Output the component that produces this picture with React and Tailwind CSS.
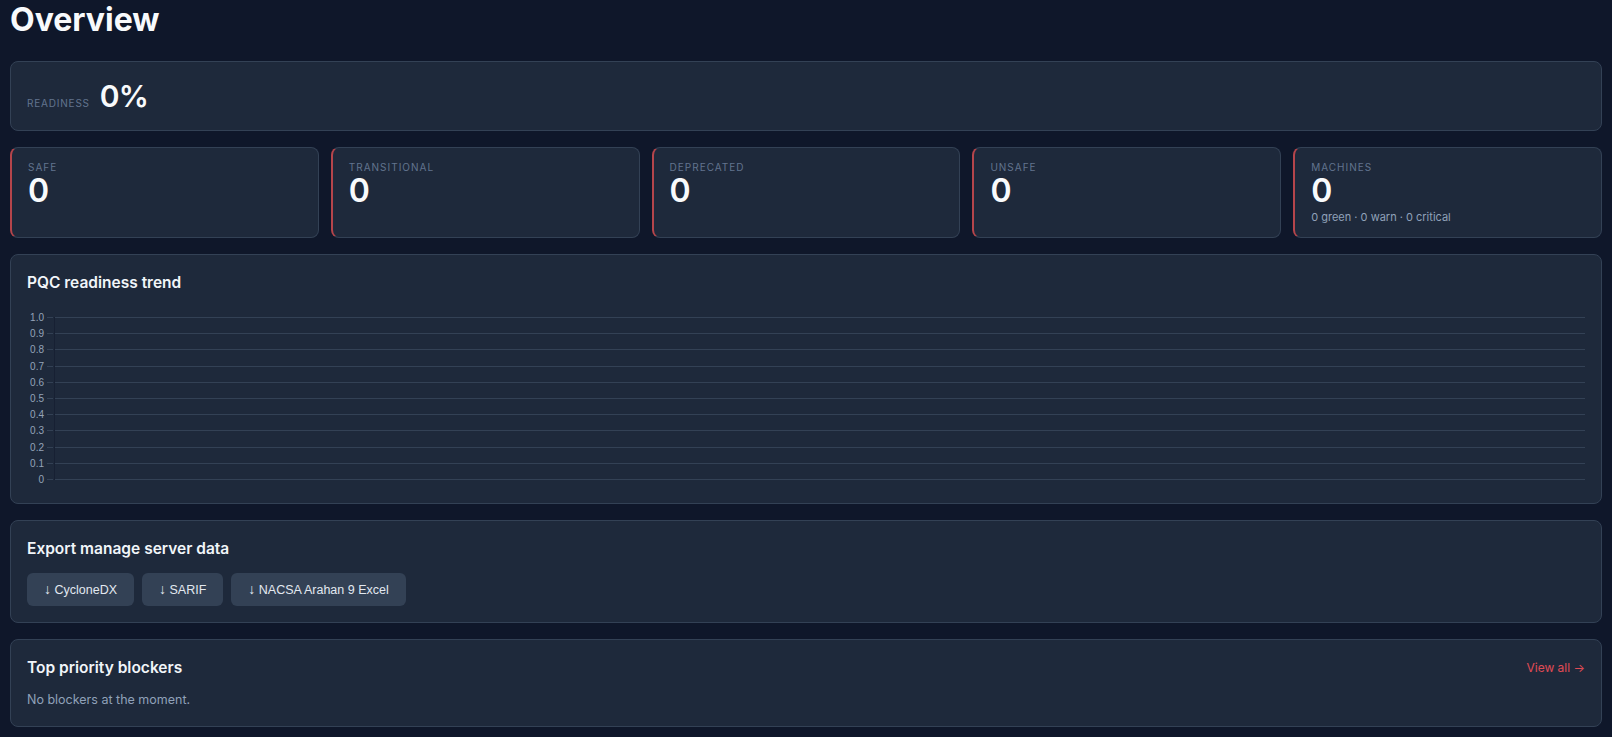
import React from "react";

const stats = [
  { label: "SAFE", value: "0" },
  { label: "TRANSITIONAL", value: "0" },
  { label: "DEPRECATED", value: "0" },
  { label: "UNSAFE", value: "0" },
  { label: "MACHINES", value: "0", sub: "0 green · 0 warn · 0 critical" },
];

const ticks = ["1.0", "0.9", "0.8", "0.7", "0.6", "0.5", "0.4", "0.3", "0.2", "0.1", "0"];

function Chart() {
  const top = 14;
  const step = 16.2;
  return (
    <svg width="100%" height="184" className="block">
      {ticks.map((t, i) => {
        const y = Math.round(top + i * step);
        return (
          <g key={t}>
            <text
              x="17"
              y={y + 3.5}
              textAnchor="end"
              fontSize="10"
              fill="#94a3b8"
              fontFamily="'Liberation Sans', Arial, sans-serif"
            >
              {t}
            </text>
            <line x1="20" x2="26" y1={y + 0.5} y2={y + 0.5} stroke="#334155" strokeWidth="1" />
            <line x1="27" x2="100%" y1={y + 0.5} y2={y + 0.5} stroke="#334155" strokeWidth="1" />
          </g>
        );
      })}
      <line x1="27.5" x2="27.5" y1={top} y2={top + 10 * step + 1} stroke="#172033" strokeWidth="1" />
    </svg>
  );
}

export default function App() {
  return (
    <div
      className="min-h-[737px] bg-[#0f172a] px-2.5 pt-[2px] pb-2.5 text-slate-100"
      style={{ fontFamily: "Inter, 'Noto Sans', sans-serif" }}
    >
      <h1 className="text-[32px] leading-9 font-bold text-slate-50">Overview</h1>

      <div className="mt-[23px] flex items-baseline gap-2.5 rounded-lg border border-[#334155] bg-[#1e293b] px-4 py-4">
        <span className="text-[10px] tracking-[0.08em] text-slate-500">READINESS</span>
        <span className="text-3xl leading-9 font-semibold tracking-tight text-slate-50">0%</span>
      </div>

      <div className="mt-4 grid grid-cols-5 gap-3">
        {stats.map((s) => (
          <div
            key={s.label}
            className="rounded-lg border border-[#334155] border-l-2 border-l-[#b5454b] bg-[#1e293b] px-4 pt-3 pb-3"
          >
            <div className="text-[10px] leading-[14px] tracking-[0.1em] text-slate-500">{s.label}</div>
            <div className="mt-px text-[32px] leading-8 font-semibold text-slate-50">{s.value}</div>
            {s.sub && <div className="mt-0.5 text-[11px] leading-4 text-slate-400">{s.sub}</div>}
          </div>
        ))}
      </div>

      <div className="mt-4 rounded-lg border border-[#334155] bg-[#1e293b] px-4 pt-4 pb-4">
        <h2 className="text-[15.5px] leading-6 font-semibold text-slate-100">PQC readiness trend</h2>
        <div className="mt-2">
          <Chart />
        </div>
      </div>

      <div className="mt-4 rounded-lg border border-[#334155] bg-[#1e293b] px-4 pt-4 pb-4">
        <h2 className="text-[15.5px] leading-6 font-semibold text-slate-100">Export manage server data</h2>
        <div className="mt-3 flex gap-2">
          {["CycloneDX", "SARIF", "NACSA Arahan 9 Excel"].map((b) => (
            <button
              key={b}
              className="rounded-md bg-[#334155] px-[17px] py-2 text-[12.5px] leading-4 text-slate-200"
              style={{ fontFamily: "'Liberation Sans', Arial, sans-serif" }}
            >
              <span className="text-[14px] leading-4">↓</span> {b}
            </button>
          ))}
        </div>
      </div>

      <div className="mt-4 rounded-lg border border-[#334155] bg-[#1e293b] px-4 pt-4 pb-4">
        <div className="flex items-center justify-between">
          <h2 className="text-[15.5px] leading-6 font-semibold text-slate-100">Top priority blockers</h2>
          <a className="text-xs text-[#e04b55]">View all →</a>
        </div>
        <p className="mt-2.5 text-[12.5px] leading-5 text-slate-400">No blockers at the moment.</p>
      </div>
    </div>
  );
}
